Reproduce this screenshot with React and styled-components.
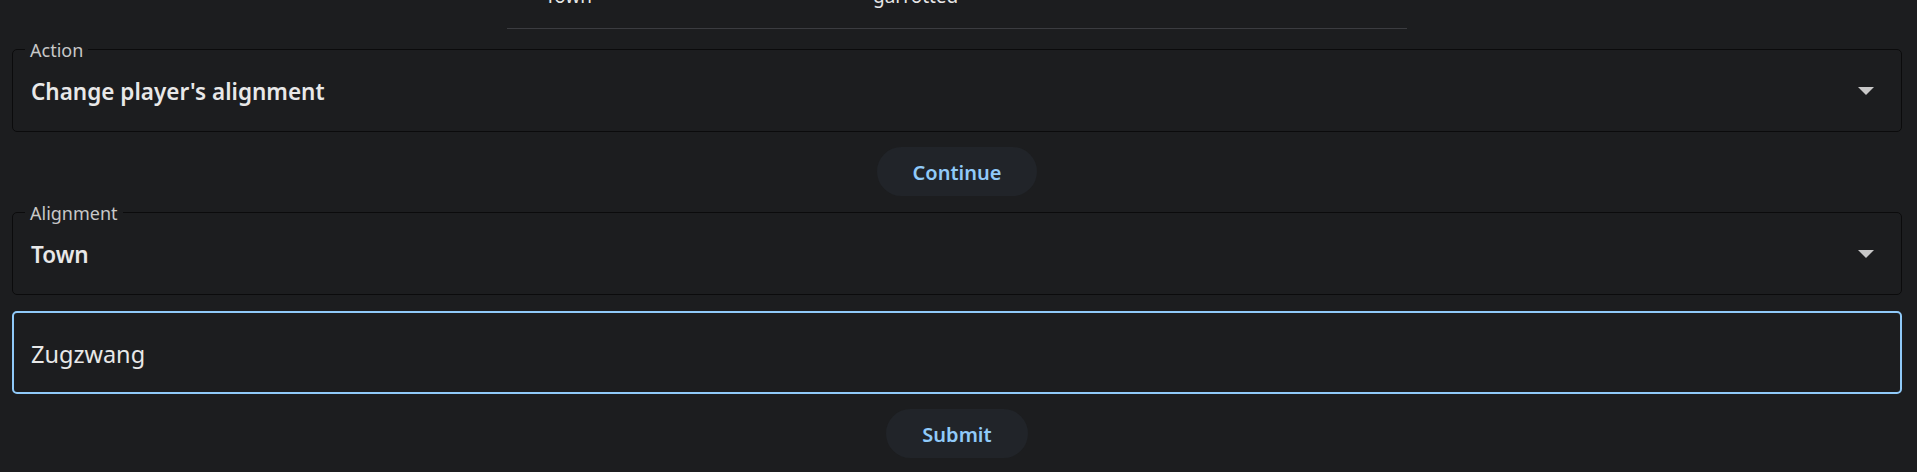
import styled, { createGlobalStyle } from "styled-components";

const GlobalStyle = createGlobalStyle`
  html, body {
    margin: 0;
    padding: 0;
    background: #1c1d1f;
    overflow: hidden;
  }
  body {
    font-family: "Noto Sans", "Open Sans", sans-serif;
    color: #e6e6e6;
  }
`;

// page is scrolled down a little, so the results table above is mostly out of view
const Page = styled.div`
  width: 1917px;
  box-sizing: border-box;
  padding: 0 15px 0 12px;
  margin-top: -39px;
`;

const Table = styled.div`
  width: 900px;
  margin: 0 auto;
`;

const Row = styled.div`
  display: flex;
  height: 67px;
  align-items: center;
  border-bottom: 1px solid #3b3c40;
`;

const Cell = styled.div`
  width: ${(p) => p.$w}px;
  padding-left: ${(p) => p.$pad}px;
  box-sizing: border-box;
  font-size: 19px;
  line-height: 28px;
  padding-top: 2px;
  color: #e6e6e6;
`;

const Form = styled.div`
  display: flex;
  flex-direction: column;
  align-items: center;
  margin-top: 20px;
`;

const Field = styled.div`
  position: relative;
  width: 100%;
  height: 83px;
  box-sizing: border-box;
  border: ${(p) => (p.$focused ? "2px solid #90caf9" : "1px solid #0b0b0c")};
  border-radius: 5px;
  display: flex;
  align-items: center;
  padding: ${(p) => (p.$focused ? "3px 0 0 17px" : "3px 0 0 18px")};
  margin-bottom: ${(p) => p.$mb}px;
`;

const Label = styled.span`
  position: absolute;
  top: -11px;
  left: 12px;
  padding: 0 5px;
  background: #1c1d1f;
  font-size: 18px;
  line-height: 22px;
  color: #c8c8c8;
`;

const Value = styled.div`
  flex: 1;
  font-size: ${(p) => (p.$bold ? 22.5 : 23.5)}px;
  line-height: 30px;
  font-weight: ${(p) => (p.$bold ? 600 : 400)};
  color: #e8e8e8;
`;

const Arrow = styled.svg`
  width: 16px;
  height: 8px;
  margin-right: 27px;
  margin-top: -3px;
`;

const Button = styled.button`
  height: 49px;
  padding: 3px 36px 0;
  border: none;
  border-radius: 999px;
  background: #212429;
  color: #90caf9;
  font-family: "Noto Sans", "Open Sans", sans-serif;
  font-size: 20px;
  font-weight: 600;
  line-height: 28px;
  cursor: pointer;
  margin-bottom: ${(p) => p.$mb}px;
`;

const Caret = () => (
  <Arrow viewBox="0 0 16 8">
    <path d="M0 0 L16 0 L8 8 Z" fill="#c8c8c8" />
  </Arrow>
);

const App = () => {
  return (
    <>
      <GlobalStyle />
      <Page>
        <Table>
          <Row>
            <Cell $w={330} $pad={38}>Town</Cell>
            <Cell $w={570} $pad={36}>garrotted</Cell>
          </Row>
        </Table>
        <Form>
          <Field $mb={15}>
            <Label>Action</Label>
            <Value $bold>Change player's alignment</Value>
            <Caret />
          </Field>
          <Button $mb={16}>Continue</Button>
          <Field $mb={16}>
            <Label>Alignment</Label>
            <Value $bold>Town</Value>
            <Caret />
          </Field>
          <Field $focused $mb={15}>
            <Value>Zugzwang</Value>
          </Field>
          <Button>Submit</Button>
        </Form>
      </Page>
    </>
  );
};

export default App;
